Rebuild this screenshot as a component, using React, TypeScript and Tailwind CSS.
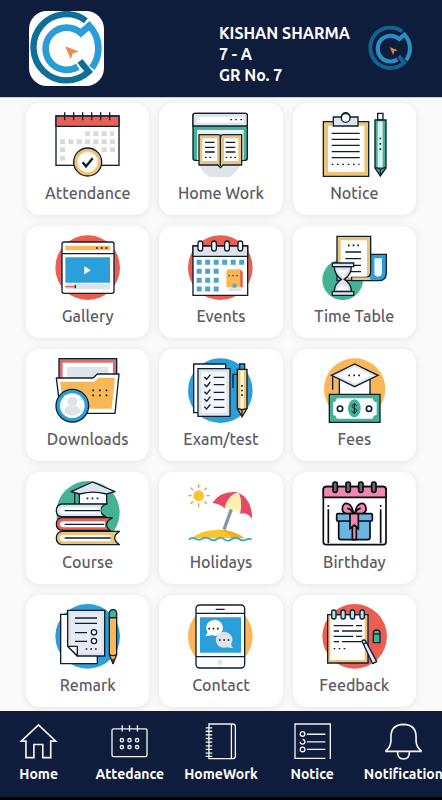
import type { ReactNode } from "react";

const INK = "#0d1f33";
const RED = "#ea5f52";
const BLUE = "#2b9fd9";
const GREEN = "#43b394";
const AMBER = "#fab758";
const TAN = "#efc376";
const GREY = "#dfe3ea";

function Icon({ viewBox, children }: { viewBox: string; children: ReactNode }) {
  return (
    <svg viewBox={viewBox} className="size-[65px]" fill="none" stroke={INK} strokeWidth="4" aria-hidden="true">
      {children}
    </svg>
  );
}

function AttendanceIcon() {
  return (
    <Icon viewBox="105 42 195 195">
      <rect x="108" y="54" width="189" height="148" fill="#fff" />
      <path d="M108 54h189v31H108z" fill={RED} />
      <path d="M134 43v24M161 43v24M188 43v24M215 43v24M242 43v24M269 43v24" />
      <path
        d="M195 107h88M120 131h165M120 155h20M245 155h40M120 181h20"
        stroke="#d9dadd"
        strokeWidth="14"
        strokeDasharray="15 10"
      />
      <circle cx="203" cy="192" r="42" fill={TAN} />
      <circle cx="203" cy="192" r="31" fill="#fff" stroke="#f6dba4" strokeWidth="3" />
      <path d="M188 193l10 12 20-24" strokeWidth="7" />
    </Icon>
  );
}

function HomeWorkIcon() {
  return (
    <Icon viewBox="101 42 195 195">
      <path d="M134 198a65 65 0 0 0 124 0z" fill={GREY} stroke="none" />
      <rect x="116" y="46" width="163" height="141" rx="6" fill={GREEN} />
      <path d="M128 96h140v90H128z" fill="#edf1f3" stroke="none" />
      <path d="M116 84V52q0-6 6-6h151q6 0 6 6v32z" fill={GREY} />
      <path d="M128 57h139v17H128z" fill="#fff" stroke="none" />
      <path d="M228 65h36" strokeDasharray="5 10" />
      <path d="M134 110h57q8 0 8 6 0-6 8-6h55v91h-56l-8 8-7-8h-57z" fill={TAN} strokeLinejoin="round" />
      <path d="M144 121h44v68h-44zM209 121h43v68h-43z" fill="#fff" stroke="none" />
      <path d="M198 114v90M152 133h29M152 148h29M152 162h29M214 133h29M214 148h29M214 162h29" />
      <path d="M152 178h22M214 178h32" strokeDasharray="5 8" />
    </Icon>
  );
}

function NoticeIcon() {
  return (
    <Icon viewBox="105 42 195 195">
      <path d="M109 71h136v164H109z" fill={TAN} />
      <path d="M123 83h109v139H123z" fill="#fff" stroke="none" />
      <path d="M139 84V57h24a13 13 0 0 1 26 0h24v27z" fill={GREY} />
      <circle cx="176" cy="60" r="13" fill="#fff" />
      <path d="M134 106h84M134 124h84M134 142h84M134 161h84M134 179h84" />
      <path d="M134 199h84" strokeDasharray="5 11" />
      <path d="M272 46h16v20h-16z" fill="#fff" />
      <path d="M264 66h33v144l-17 24-16-24z" fill={GREEN} />
      <path d="M272 70h15v137h-15z" fill="#d8f2ee" stroke="none" />
      <path d="M265 208l15 6 15-6M280 214v18" />
      <path d="M280 119v38" strokeWidth="5" strokeDasharray="5 11" />
    </Icon>
  );
}

function GalleryIcon() {
  return (
    <Icon viewBox="105 39 195 195">
      <circle cx="203" cy="137" r="97" fill={RED} stroke="none" />
      <rect x="126" y="60" width="156" height="154" rx="6" fill="#fff" />
      <path d="M136 71h134v14H136z" fill={AMBER} stroke="none" />
      <path d="M228 78h36" strokeWidth="5" strokeDasharray="6 8" />
      <path d="M126 95h156" />
      <path d="M136 106h134v76H136z" fill={BLUE} stroke="none" />
      <path d="M193 133l19 12-19 12z" fill="#fff" stroke="none" />
      <path d="M136 194h134" stroke={GREY} strokeWidth="16" />
      <path d="M136 194h28" stroke={RED} />
      <path d="M166 189v10" />
    </Icon>
  );
}

function EventsIcon() {
  return (
    <Icon viewBox="506 39 195 195">
      <circle cx="603" cy="137" r="97" fill={RED} stroke="none" />
      <path d="M521 72h164v148H521z" fill="#fff" />
      <path d="M521 72h164v31H521z" fill={GREY} />
      <g fill="#fff">
        <rect x="536" y="57" width="14" height="30" rx="7" />
        <rect x="577" y="57" width="14" height="30" rx="7" />
        <rect x="616" y="57" width="14" height="30" rx="7" />
        <rect x="656" y="57" width="14" height="30" rx="7" />
      </g>
      <path
        d="M532 121h145M532 148h68M532 175h68M532 201h68"
        stroke="#4aa5c8"
        strokeWidth="15"
        strokeDasharray="15 10.5"
      />
      <path d="M621 147l6-5h36l6 5v49h-48z" fill={AMBER} stroke="none" />
      <path d="M663 144l7 5v47h-7z" fill="#e05a49" stroke="none" />
      <path d="M627 161h30" stroke="#6c4434" strokeDasharray="5 7" />
      <path d="M627 202h40" stroke={GREY} strokeWidth="10" />
      <path d="M640 185h11v12h-11z" fill="#4aa5c8" stroke="none" />
    </Icon>
  );
}

function TimeTableIcon() {
  return (
    <Icon viewBox="105 39 195 195">
      <circle cx="167" cy="173" r="61" fill={GREEN} stroke="none" />
      <path d="M150 43h101v132H150z" fill={TAN} />
      <path d="M161 55h79v110h-79z" fill="#fff" stroke="none" />
      <path d="M183 70h34" strokeWidth="5" strokeDasharray="5 9" />
      <path d="M175 90h47M175 110h47M190 130h32M190 149h32" />
      <path d="M251 97h47v55q0 24-24 24h-80v-10h40q17 0 17-17z" fill={BLUE} />
      <path d="M262 109h23v42q0 13-12 13t-11-13z" fill="#eef7fc" stroke="none" />
      <path d="M196 166h54v8h-54z" fill={TAN} stroke="none" />
      <path d="M142 134q0 23 21 38-21 13-21 36h51q0-23-21-36 21-15 21-38z" fill={GREY} />
      <path d="M150 145h35l-17 21zM151 204q4-11 17-15 12 4 16 15z" fill="#fff" stroke="none" />
      <path d="M136 123h64v11h-64zM136 209h64v11h-64z" fill={GREY} />
    </Icon>
  );
}

function DownloadsIcon() {
  return (
    <Icon viewBox="105 39 195 195">
      <path d="M117 41h173v80H117z" fill="#d9706f" />
      <path d="M128 53h151v60H128z" fill="#fff" stroke="none" />
      <path d="M141 66h124v45H141z" fill={GREY} stroke="none" />
      <path d="M109 99h110l13-12h65l-12 118H122z" fill="#fff" strokeLinejoin="round" />
      <path d="M120 110h103l13-12h49l-10 93H132z" fill={AMBER} stroke="none" />
      <path d="M217 136h50M217 151h50" strokeWidth="5" strokeDasharray="5 15" />
      <circle cx="157" cy="182" r="49" fill={BLUE} />
      <circle cx="157" cy="182" r="37" fill="#fff" stroke="none" />
      <circle cx="157" cy="170" r="15" fill={GREY} stroke="none" />
      <path d="M132 201q3-17 15-18 10 8 20 0 13 3 15 18-25 22-50 0z" fill={GREY} stroke="none" />
    </Icon>
  );
}

function ExamIcon() {
  return (
    <Icon viewBox="506 39 195 195">
      <circle cx="603" cy="137" r="97" fill={BLUE} stroke="none" />
      <path d="M523 57h96v146h-96z" fill="#fff" />
      <path d="M536 71h96v143h-96z" fill={GREY} />
      <path d="M546 81h76v123h-76z" fill="#f5f6f9" stroke="none" />
      <path d="M555 96l7 7 11-14M555 118l7 7 11-14M555 140l7 7 11-14M555 162l7 7 11-14M555 185l7 7 11-14" />
      <path d="M583 97h32M583 119h32M583 142h32M583 164h32M583 187h32" />
      <path d="M654 88h-13v41" />
      <path d="M661 57h15v17h-15z" fill={BLUE} />
      <path d="M654 73h29v118l-15 24-14-24z" fill={TAN} />
      <path d="M663 77h11v112h-11z" fill="#fff4da" stroke="none" />
      <path d="M654 190l14 5 15-5M668 195v19" />
      <path d="M668 120v34" strokeWidth="5" strokeDasharray="5 9" />
    </Icon>
  );
}

function FeesIcon() {
  return (
    <Icon viewBox="105 406 195 195">
      <circle cx="203" cy="499" r="92" fill={AMBER} stroke="none" />
      <path d="M157 465h92v52h-92z" fill="#fff" />
      <path d="M163 470h79l-39 18z" fill={GREY} stroke="none" />
      <path d="M133 458l70-34 70 34-70 34z" fill={GREY} />
      <path d="M151 458l52-25 52 25-52 25z" fill="#fff" stroke="none" />
      <path d="M137 460v41" />
      <path d="M184 458h38" strokeWidth="5" strokeDasharray="5 10" />
      <path d="M127 515h152v84H127z" fill={GREEN} />
      <path d="M149 527h108q1 11 12 12v38q-11 1-12 11H149q-1-10-11-11v-38q10-1 11-12z" fill="#fff" stroke="none" />
      <ellipse cx="202" cy="557" rx="19" ry="27" fill={GREEN} stroke="none" />
      <circle cx="159" cy="558" r="8" strokeWidth="5" />
      <circle cx="246" cy="558" r="8" strokeWidth="5" />
      <path d="M209 550q-2-6-8-5-6 1-6 6 0 4 7 6t7 7q-1 6-7 6-6 0-8-6M202 541v33" strokeWidth="3" />
    </Icon>
  );
}

function CourseIcon() {
  return (
    <Icon viewBox="105 39 195 195">
      <circle cx="204" cy="134" r="95" fill={GREEN} stroke="none" />
      <path d="M178 74l40-13 42 13v35h-82z" fill="#fff" />
      <path d="M153 71l65-29 67 29-26 7q-40-11-80 0z" fill={GREY} strokeLinejoin="round" />
      <path d="M164 76v31" />
      <path d="M200 91h38" strokeWidth="5" strokeDasharray="5 10" />
      <path d="M258 108H125q-16 3-16 20 0 16 16 18h131q-30-20 2-38z" fill={GREY} />
      <path d="M278 149H125q-16 3-16 19t16 19h144q-22-22 9-38z" fill={RED} />
      <path d="M298 190H125q-16 3-16 20 0 17 16 20h173q-28-20 0-40z" fill={TAN} />
      <path
        d="M242 118H129q-10 2-10 10t10 9h113zM255 160H129q-10 2-10 9t10 9h126zM272 201H129q-10 2-10 9t10 10h143z"
        fill="#fff"
        stroke="none"
      />
      <path d="M134 128h107M134 169h119M134 210h138" />
    </Icon>
  );
}

function HolidaysIcon() {
  return (
    <Icon viewBox="506 39 195 195">
      <circle cx="538" cy="83" r="16" fill="#fbc52e" stroke="none" />
      <path
        d="M538 50v8M538 108v8M508 83h7M563 83h7M515 60l5 5M556 101l5 5M561 60l-5 5M520 101l-5 5"
        stroke="#ef9d43"
        strokeLinecap="round"
      />
      <path d="M518 211q25-25 78-26 50 0 79 26z" fill="#fbc52e" stroke="none" />
      <path d="M596 185q50 0 79 26h-39q-5-20-40-26z" fill="#efae2d" stroke="none" />
      <path d="M636 124l-22 61" stroke="#8598a3" strokeWidth="10" />
      <path d="M579 105q26-39 78-32-31 7-41 48-17-15-37-16z" fill="#e94865" stroke="none" />
      <path d="M657 74q42 19 41 78-15-20-36-15 7-45-5-63z" fill="#e94865" stroke="none" />
      <path d="M657 74q12 20 5 63-20-20-46-16 7-38 41-47z" fill="#fff0ad" stroke="none" />
      <path
        d="M508 215q10-9 20-3t20 1q12-8 23 0t22 0q12-8 22 1t23-1q11-7 21 0t20 2 18 0"
        stroke="#36a9c0"
        strokeWidth="5"
      />
    </Icon>
  );
}

function BirthdayIcon() {
  return (
    <Icon viewBox="105 39 195 195">
      <g stroke="#080a10" strokeWidth="5">
        <rect x="109" y="56" width="188" height="174" rx="9" fill="#fff" />
        <path d="M109 88V65q0-9 9-9h170q9 0 9 9v23z" fill="#f087b1" />
        <g fill="#706664">
          <rect x="138" y="42" width="13" height="31" rx="6" />
          <rect x="177" y="42" width="13" height="31" rx="6" />
          <rect x="215" y="42" width="13" height="31" rx="6" />
          <rect x="254" y="42" width="13" height="31" rx="6" />
        </g>
        <path d="M124 111v5M124 124v102M281 111v5M281 124v102" />
        <path
          d="M199 137q-34 4-33-14 1-22 19-15 11 5 14 29zM204 137q34 4 33-14-1-22-19-15-11 5-14 29z"
          fill="#f087b1"
        />
        <path d="M181 121q11 1 18 15M221 121q-11 1-18 15" />
        <path d="M155 157h94v51q0 7-7 7h-80q-7 0-7-7z" fill="#6bb5e0" />
        <rect x="149" y="137" width="107" height="22" rx="4" fill="#6bb5e0" />
        <path d="M189 137h25v45l-12-10-13 10zM196 176l6-5 6 5v39h-12z" fill="#f087b1" />
      </g>
    </Icon>
  );
}

function RemarkIcon() {
  return (
    <Icon viewBox="105 41 195 195">
      <circle cx="203" cy="138" r="97" fill={BLUE} stroke="none" />
      <path d="M122 72h110v148H122z" fill="#fff" />
      <path d="M143 60h111v137h-82l-29-29z" fill={GREY} />
      <path d="M153 70h91v117h-69l-22-20z" fill="#e8ebf1" stroke="none" />
      <path d="M143 168h29v29z" fill="#fff" strokeLinejoin="round" />
      <path d="M165 83h66M165 99h66M165 127h36M165 153h36" />
      <circle cx="222" cy="126" r="8" fill="#fff" />
      <circle cx="222" cy="152" r="8" fill="#fff" />
      <path d="M197 176h37" strokeDasharray="5 9" />
      <path d="M268 82h22v111l-11 27-11-27z" fill={AMBER} strokeLinejoin="round" />
      <path d="M268 82V68q1-10 11-10t11 10v14z" fill={GREEN} />
      <path d="M268 193q11 6 22 0M279 205v15" />
    </Icon>
  );
}

function ContactIcon() {
  return (
    <Icon viewBox="506 41 195 195">
      <circle cx="603" cy="138" r="97" fill={AMBER} stroke="none" />
      <rect x="530" y="44" width="146" height="189" rx="11" fill="#fff" />
      <path d="M530 69h146M530 199h146M589 57h27" />
      <path d="M542 81h123v106H542z" fill={BLUE} stroke="none" />
      <path d="M558 138l7-12a25 24 0 1 1 12 9z" fill="#fff" stroke="none" />
      <path d="M641 174l-6-12a25 24 0 1 0-12 9z" fill={GREY} stroke="none" />
      <path d="M567 115h32M599 149h32" strokeWidth="5" strokeDasharray="5 8" />
      <circle cx="602" cy="216" r="8" fill={GREY} stroke="none" />
    </Icon>
  );
}

function FeedbackIcon() {
  return (
    <Icon viewBox="105 407 195 195">
      <circle cx="203" cy="504" r="97" fill={RED} stroke="none" />
      <path d="M122 439h121v145H122z" fill={TAN} />
      <path d="M130 443h103v132H130z" fill="#fff" stroke="none" />
      <g fill="#b9e2dc">
        <rect x="134" y="425" width="13" height="27" rx="6" />
        <rect x="162" y="425" width="13" height="27" rx="6" />
        <rect x="190" y="425" width="13" height="27" rx="6" />
        <rect x="219" y="425" width="13" height="27" rx="6" />
      </g>
      <path d="M140 472h59M207 472h18M140 488h16M165 488h60M140 504h59M207 504h18M140 520h16M165 520h60" />
      <path d="M140 541h38" strokeDasharray="5 10" />
      <path d="M225 518q6-6 11 0l33 62-12 6z" fill="#e3ebf5" strokeLinejoin="round" />
      <path d="M228 528l10-5" />
      <path d="M259 523v-29q0-9 10-9t10 9v29z" fill={GREEN} />
      <path d="M259 497h20" />
    </Icon>
  );
}

function LogoMark({ className, viewBox }: { className: string; viewBox: string }) {
  return (
    <svg viewBox={viewBox} className={className} fill="none" role="img" aria-label="School logo">
      <path d="M258 64A98 99 0 1 0 266 216L240 184" stroke="#0e6f97" strokeWidth="19" />
      <path d="M234 201A63 63 0 1 1 243 101L268 79A98 98 0 0 1 276 205" stroke="#2b9dd6" strokeWidth="20" />
      <path d="M196 140l40 16-18 6-5 18z" fill="#ef8b43" />
    </svg>
  );
}

const tiles = [
  { label: "Attendance", icon: <AttendanceIcon /> },
  { label: "Home Work", icon: <HomeWorkIcon /> },
  { label: "Notice", icon: <NoticeIcon /> },
  { label: "Gallery", icon: <GalleryIcon /> },
  { label: "Events", icon: <EventsIcon /> },
  { label: "Time Table", icon: <TimeTableIcon /> },
  { label: "Downloads", icon: <DownloadsIcon /> },
  { label: "Exam/test", icon: <ExamIcon /> },
  { label: "Fees", icon: <FeesIcon /> },
  { label: "Course", icon: <CourseIcon /> },
  { label: "Holidays", icon: <HolidaysIcon /> },
  { label: "Birthday", icon: <BirthdayIcon /> },
  { label: "Remark", icon: <RemarkIcon /> },
  { label: "Contact", icon: <ContactIcon /> },
  { label: "Feedback", icon: <FeedbackIcon /> },
];

const tabs = [
  { label: "Home", path: <path strokeWidth="5" d="M12 55L64 6l52 49H101v50H77V65H50v40H26V55z" /> },
  {
    label: "Attedance",
    path: (
      <>
        <rect x="11" y="18" width="106" height="84" rx="5" />
        <path d="M42 7v19M64 7v19M88 7v19" />
        <g strokeWidth="4">
          <circle cx="41" cy="52" r="5" />
          <circle cx="64" cy="52" r="5" />
          <circle cx="87" cy="52" r="5" />
          <circle cx="41" cy="73" r="5" />
          <circle cx="64" cy="73" r="5" />
          <circle cx="87" cy="73" r="5" />
        </g>
      </>
    ),
  },
  {
    label: "HomeWork",
    path: (
      <>
        <path d="M29 3h72q8 0 8 8v89q0 8-8 8H29z" />
        <path d="M97 3v105" />
        <path d="M19 15h20M19 25h20M19 36h20M19 47h20M19 58h20M19 69h20M19 80h20M19 91h20M19 101h20" />
      </>
    ),
  },
  {
    label: "Notice",
    path: (
      <>
        <path d="M103 107H11V3h107v106" />
        <path d="M47 34h56M47 57h56M47 80h56" />
        <circle cx="34" cy="33" r="7" />
        <path d="M34 50a7 7 0 1 1-7 7" />
        <circle cx="34" cy="80" r="7" />
      </>
    ),
  },
  {
    label: "Notification",
    path: (
      <path
        strokeWidth="5"
        d="M11 84Q25 73 26 54V40Q27 5 64 4q37 1 38 36v14q1 19 15 30v2H11zM46 87q0 22 18 22t18-22"
      />
    ),
  },
];

export default function App() {
  return (
    <div className="flex min-h-screen flex-col overflow-hidden bg-[#fafafa] font-['Ubuntu','Noto_Sans',sans-serif]">
      <header className="flex h-[98px] items-center border-b border-[#c9cbdc] bg-[#0f1d3c] px-[29px]">
        <div className="flex size-[75px] items-center justify-center overflow-hidden rounded-[18px] bg-white">
          <LogoMark viewBox="88 35 224 224" className="size-full" />
        </div>
        <div className="ml-auto flex items-center gap-[18px] pt-3">
          <div className="text-base leading-[21px] font-semibold whitespace-nowrap text-white">
            <p>KISHAN SHARMA</p>
            <p>7 - A</p>
            <p>GR No. 7</p>
          </div>
          <LogoMark viewBox="90 37 220 220" className="mb-3 size-[45px] opacity-90" />
        </div>
      </header>

      <main className="grid grow grid-cols-3 content-start gap-x-[10px] gap-y-[11px] px-[26px] pt-[5px] pb-1">
        {tiles.map(({ label, icon }) => (
          <button
            key={label}
            type="button"
            className="flex h-28 flex-col items-center rounded-[14px] bg-white pt-[9px] shadow-[0_1px_8px_rgba(0,0,0,0.09)]"
          >
            {icon}
            <span className="mt-1 text-base leading-6 font-medium text-[#5d5b66]">{label}</span>
          </button>
        ))}
      </main>

      <nav className="-mx-[7px] grid h-[89px] grid-cols-5 border-b-3 border-black bg-[#0f1d3c]">
        {tabs.map(({ label, path }) => (
          <a key={label} href="#" className="flex flex-col items-center pt-3 text-white">
            <svg viewBox="0 0 128 112" className="h-[37px] w-[43px]" fill="none" stroke="#f1f3f8" strokeWidth="4" aria-hidden="true">
              {path}
            </svg>
            <span className="mt-1 text-sm leading-5 font-semibold">{label}</span>
          </a>
        ))}
      </nav>
    </div>
  );
}
